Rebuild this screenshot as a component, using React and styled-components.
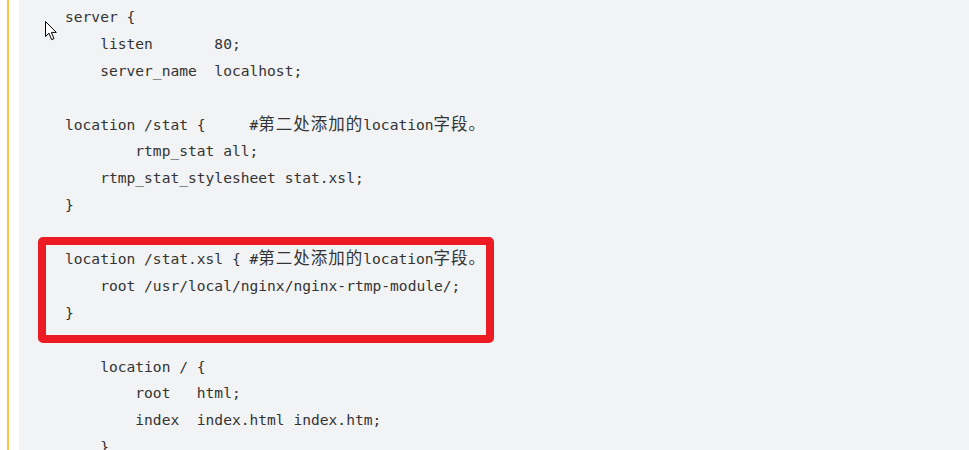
import React from "react";
import styled, { createGlobalStyle } from "styled-components";

const Global = createGlobalStyle`
  html, body { margin: 0; padding: 0; background: #ffffff; }
  body { overflow: hidden; }
`;

const Page = styled.div`
  position: relative;
  width: 969px;
  height: 450px;
  overflow: hidden;
  background: #ffffff;
`;

const Quote = styled.div`
  display: flex;
  margin-left: 7px;
  border-left: 2px solid #f7c646;
  padding-left: 10px;
  height: 100%;
`;

const CodeBlock = styled.pre`
  position: relative;
  flex: 1;
  margin: 0;
  padding: 4px 0 0 46px;
  background: #f2f3f5;
  font-family: "DejaVu Sans Mono", "Noto Sans CJK SC", monospace;
  font-size: 14.6px;
  line-height: 26.9px;
  color: #333333;
  white-space: pre;
`;

const Line = styled.div`
  height: 26.9px;
`;

const Cjk = styled.span`
  font-family: "Noto Sans CJK SC", sans-serif;
  font-size: 16.5px;
  letter-spacing: 1px;
  line-height: 1;
`;

const Highlight = styled.div`
  position: absolute;
  left: 19px;
  top: 237px;
  width: 456px;
  height: 106px;
  box-sizing: border-box;
  border: 8px solid #ed1c24;
  border-radius: 5px;
  pointer-events: none;
`;

const Cursor = styled.svg`
  position: absolute;
  left: 26px;
  top: 21px;
`;

const lines = [
  ["server {"],
  ["    listen       80;"],
  ["    server_name  localhost;"],
  [""],
  ["location /stat {     #", { cjk: "第二处添加的" }, "location", { cjk: "字段。" }],
  ["        rtmp_stat all;"],
  ["    rtmp_stat_stylesheet stat.xsl;"],
  ["}"],
  [""],
  ["location /stat.xsl { #", { cjk: "第二处添加的" }, "location", { cjk: "字段。" }],
  ["    root /usr/local/nginx/nginx-rtmp-module/;"],
  ["}"],
  [""],
  ["    location / {"],
  ["        root   html;"],
  ["        index  index.html index.htm;"],
  ["    }"],
];

export default function App() {
  return (
    <Page>
      <Global />
      <Quote>
        <CodeBlock>
          {lines.map((parts, i) => (
            <Line key={i}>
              {parts.map((p, j) =>
                typeof p === "string" ? (
                  <React.Fragment key={j}>{p}</React.Fragment>
                ) : (
                  <Cjk key={j}>{p.cjk}</Cjk>
                )
              )}
              {parts.length === 1 && parts[0] === "" ? " " : null}
            </Line>
          ))}
          <Highlight />
          <Cursor width="13" height="20" viewBox="0 0 13 20">
            <path
              d="M0.5 0.5 L0.5 15.5 L4 12.2 L6.6 18.6 L9 17.6 L6.4 11.4 L11.3 11.4 Z"
              fill="#ffffff"
              stroke="#000000"
              strokeWidth="1"
              strokeLinejoin="miter"
            />
          </Cursor>
        </CodeBlock>
      </Quote>
    </Page>
  );
}
